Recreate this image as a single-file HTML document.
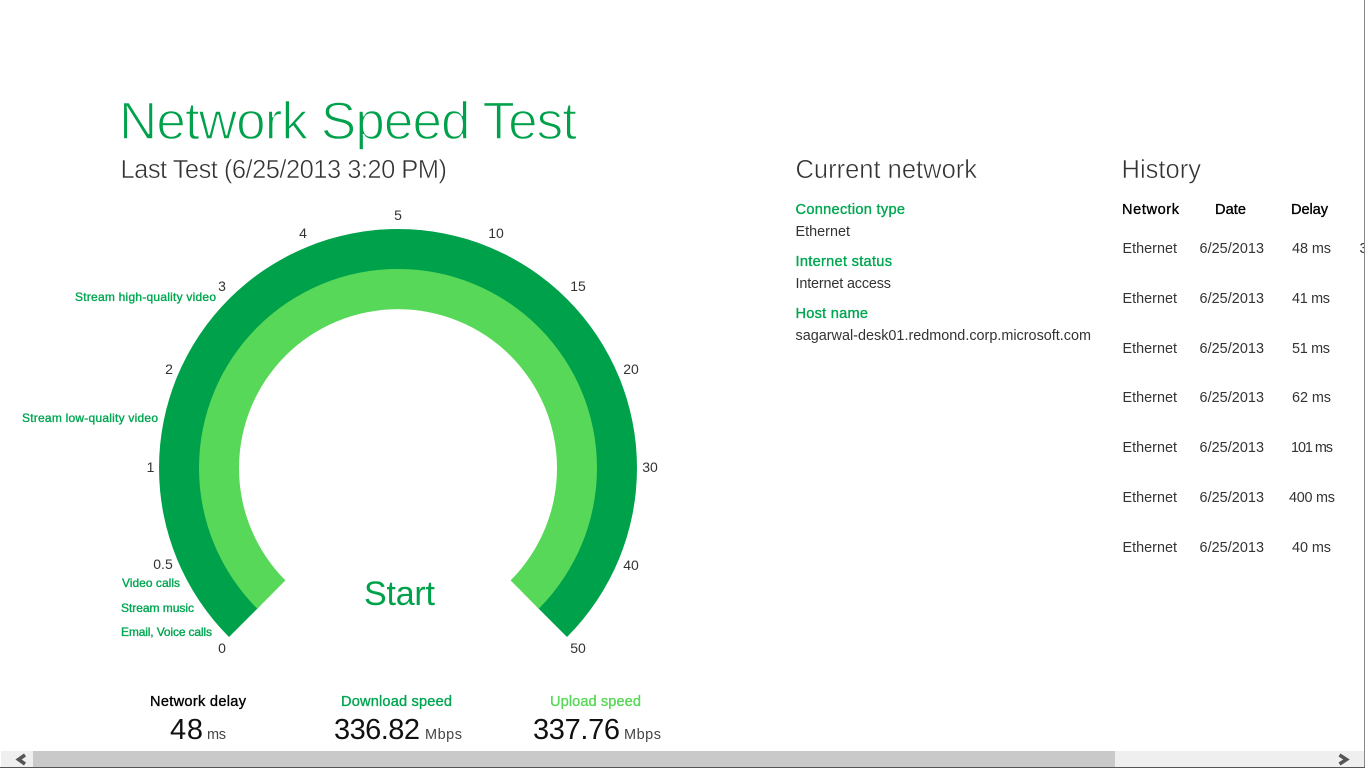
<!DOCTYPE html>
<html lang="en">
<head>
<meta charset="utf-8">
<title>Network Speed Test</title>
<style>
html,body{margin:0;padding:0;width:1365px;height:768px;overflow:hidden;background:#fff}
svg{display:block;font-family:"Liberation Sans",sans-serif}
text{white-space:pre}
.g{fill:#00a14b}
.gs{fill:#00a651;stroke:#00a651;stroke-width:.35px}
.t{fill:#333;font-size:14.4px}
.h{fill:#000;stroke:#000;stroke-width:.35px;font-size:14.6px}
.l{font-size:12px}
.n{font-size:14px;fill:#333;text-anchor:middle}
.lt{stroke:#fff;stroke-width:.7px}
.big{fill:#111;font-size:29px}
.u{fill:#444;font-size:14.5px}
</style>
</head>
<body>
<svg width="1365" height="768" viewBox="0 0 1365 768" xmlns="http://www.w3.org/2000/svg">
<rect width="1365" height="768" fill="#fff"/>

<text x="119" y="139" font-size="53" class="g lt" style="stroke-width:1.4px" textLength="458">Network Speed Test</text>
<text x="120.500" y="178" font-size="25.500" fill="#333" class="lt" style="stroke-width:.5px" textLength="326.500">Last Test (6/25/2013 3:20 PM)</text>

<!-- gauge -->
<path d="M229 637A239 239 0 1 1 567 637L536 606A195 195 0 1 0 260 606Z" fill="#00a14b"/>
<path d="M257.300 608.700A199 199 0 1 1 538.700 608.700L510.600 580.400A159 159 0 1 0 285.400 580.400Z" fill="#58d858"/>

<g class="n">
<text x="398" y="220">5</text>
<text x="303" y="238">4</text>
<text x="496" y="238">10</text>
<text x="222" y="291">3</text>
<text x="578" y="291">15</text>
<text x="169" y="374">2</text>
<text x="631" y="374">20</text>
<text x="150.500" y="472">1</text>
<text x="650" y="472">30</text>
<text x="163" y="569">0.5</text>
<text x="631" y="570">40</text>
<text x="222" y="653">0</text>
<text x="578" y="653">50</text>
</g>

<g class="gs l">
<text x="75" y="301" textLength="141">Stream high-quality video</text>
<text x="22" y="422" textLength="136">Stream low-quality video</text>
<text x="122" y="587" textLength="58">Video calls</text>
<text x="121" y="612" textLength="73">Stream music</text>
<text x="121" y="636" textLength="91">Email, Voice calls</text>
</g>

<text x="364" y="605" font-size="34" fill="#00a14b" textLength="71">Start</text>

<!-- stats -->
<text x="150" y="706" class="h" textLength="96">Network delay</text>
<text x="341" y="706" class="gs" font-size="14.600" textLength="111">Download speed</text>
<text x="550" y="706" font-size="14.600" fill="#58d858" stroke="#58d858" stroke-width=".35" textLength="91">Upload speed</text>
<text x="170" y="739" class="big" textLength="33">48</text>
<text x="207" y="739" class="u" textLength="19">ms</text>
<text x="334" y="739" class="big" textLength="86">336.82</text>
<text x="425" y="739" class="u" textLength="37">Mbps</text>
<text x="533" y="739" class="big" textLength="87">337.76</text>
<text x="624" y="739" class="u" textLength="37">Mbps</text>

<!-- current network -->
<text x="795.500" y="178" font-size="25.500" fill="#333" class="lt" style="stroke-width:.5px" textLength="181.500">Current network</text>
<g font-size="14.600" class="gs">
<text x="795.500" y="214" textLength="109.500">Connection type</text>
<text x="795.500" y="266" textLength="96.500">Internet status</text>
<text x="795.500" y="318" textLength="72.500">Host name</text>
</g>
<text x="795.500" y="236" class="t" textLength="54.500">Ethernet</text>
<text x="795.500" y="288" class="t" textLength="95.500">Internet access</text>
<text x="795.500" y="340" class="t" textLength="295.500">sagarwal-desk01.redmond.corp.microsoft.com</text>

<!-- history -->
<text x="1121.500" y="178" font-size="25.500" fill="#333" class="lt" style="stroke-width:.5px" textLength="79.500">History</text>
<text x="1122" y="214" class="h" textLength="57">Network</text>
<text x="1215" y="214" class="h" textLength="31">Date</text>
<text x="1291" y="214" class="h" textLength="37">Delay</text>

<g class="t">
<text x="1122.500" y="253" textLength="54.500">Ethernet</text><text x="1199.500" y="253" textLength="64.500">6/25/2013</text><text x="1292" y="253" textLength="39">48 ms</text>
<text x="1122.500" y="303" textLength="54.500">Ethernet</text><text x="1199.500" y="303" textLength="64.500">6/25/2013</text><text x="1292" y="303" textLength="38">41 ms</text>
<text x="1122.500" y="353" textLength="54.500">Ethernet</text><text x="1199.500" y="353" textLength="64.500">6/25/2013</text><text x="1292" y="353" textLength="38">51 ms</text>
<text x="1122.500" y="402" textLength="54.500">Ethernet</text><text x="1199.500" y="402" textLength="64.500">6/25/2013</text><text x="1292" y="402" textLength="39">62 ms</text>
<text x="1122.500" y="452" textLength="54.500">Ethernet</text><text x="1199.500" y="452" textLength="64.500">6/25/2013</text><text x="1291" y="452" textLength="42">101 ms</text>
<text x="1122.500" y="502" textLength="54.500">Ethernet</text><text x="1199.500" y="502" textLength="64.500">6/25/2013</text><text x="1289" y="502" textLength="46">400 ms</text>
<text x="1122.500" y="552" textLength="54.500">Ethernet</text><text x="1199.500" y="552" textLength="64.500">6/25/2013</text><text x="1292" y="552" textLength="39">40 ms</text>
<text x="1359.500" y="253">3</text>
</g>

<!-- scrollbar -->
<rect x="1" y="751" width="1363" height="16" fill="#efefef"/>
<rect x="33" y="751" width="1082" height="16" fill="#c9c9c9"/>
<path d="M25 755L18.500 759.500L25 764" fill="none" stroke="#555" stroke-width="3.500"/>
<path d="M1339.500 755L1346.500 759.500L1339.500 764" fill="none" stroke="#555" stroke-width="3.500"/>
<rect x="1364" y="0" width="1" height="768" fill="#888"/>
<rect x="0" y="767" width="1365" height="1" fill="#555"/>
</svg>
</body>
</html>
